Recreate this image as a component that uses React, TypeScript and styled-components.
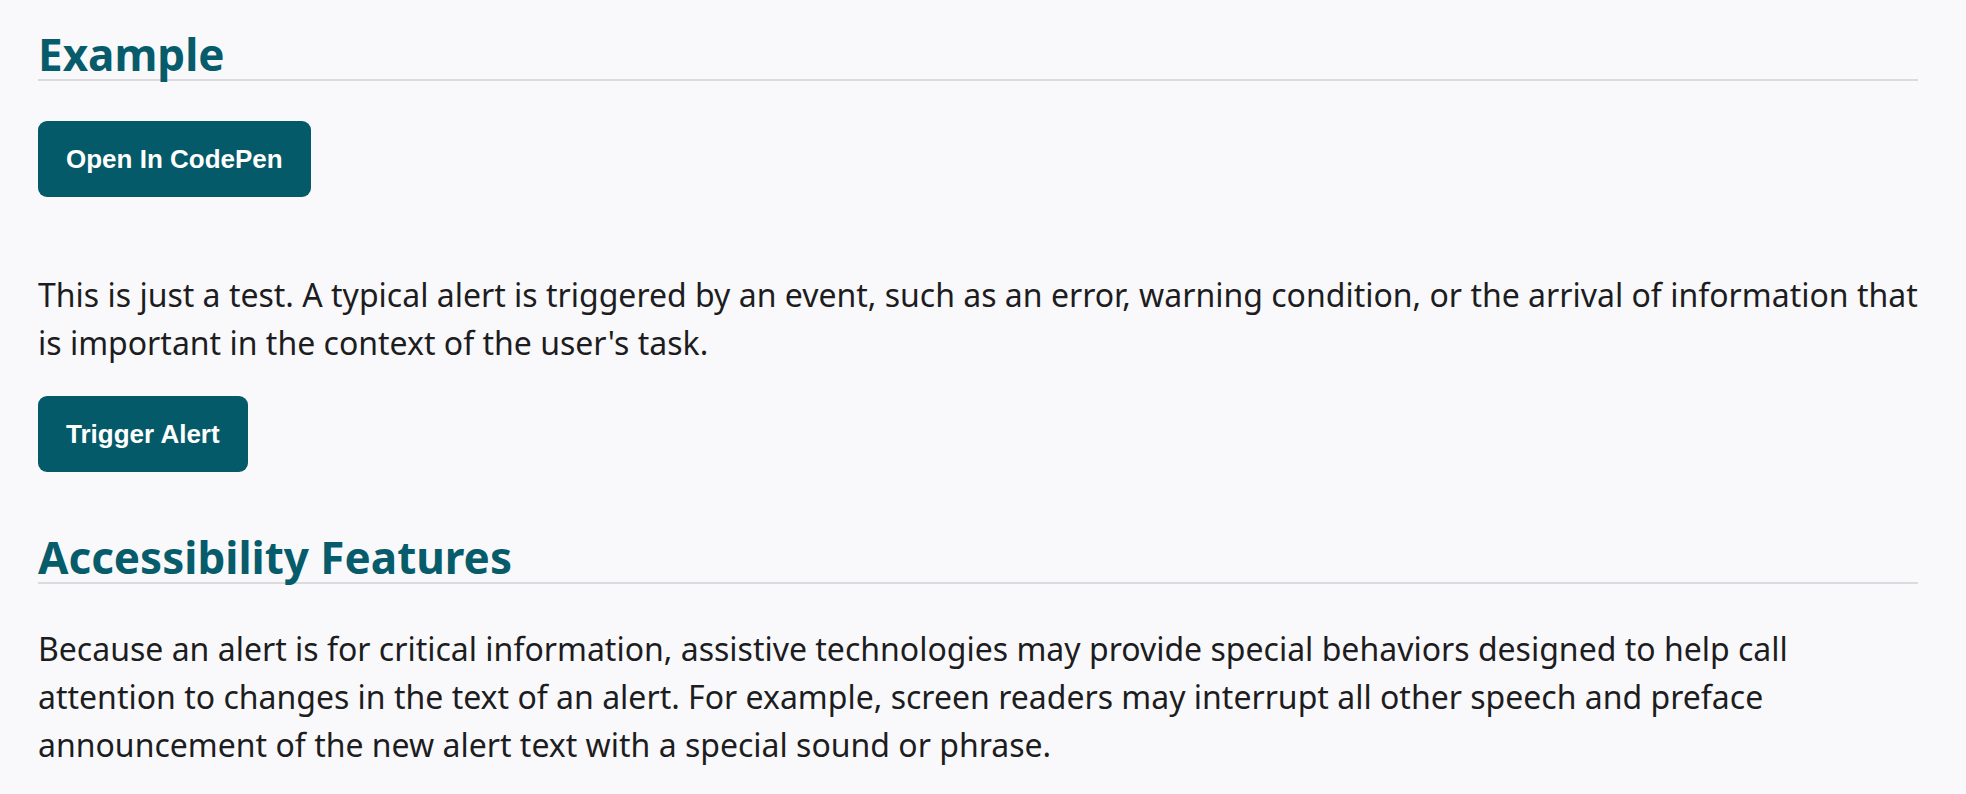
import * as React from "react";
import styled, { createGlobalStyle } from "styled-components";

const GlobalStyle = createGlobalStyle`
  html, body {
    margin: 0;
    padding: 0;
    background: #f9f9fb;
  }
  body {
    font-family: "Noto Sans", "Open Sans", sans-serif;
    color: #1d1d1f;
  }
`;

export default function App() {
  const [alertShown, setAlertShown] = React.useState(false);

  return (
    <>
      <GlobalStyle />
      <Page>
        <SectionTitle>Example</SectionTitle>
        <ActionButton type="button">Open In CodePen</ActionButton>
        <Lead>
          This is just a test. A typical alert is triggered by an event, such
          as an error, warning condition, or the arrival of information that
          is important in the context of the user's task.
        </Lead>
        <div role="alert">{alertShown ? null : null}</div>
        <ActionButton type="button" $compact onClick={() => setAlertShown(true)}>
          Trigger Alert
        </ActionButton>
        <SectionTitle $spaced>Accessibility Features</SectionTitle>
        <Body>
          Because an alert is for critical information, assistive technologies
          may provide special behaviors designed to help call attention to
          changes in the text of an alert. For example, screen readers may
          interrupt all other speech and preface announcement of the new alert
          text with a special sound or phrase.
        </Body>
      </Page>
    </>
  );
}

const Page = styled.main`
  display: flex;
  flex-direction: column;
  align-items: flex-start;
  padding: 29px 48px 40px 38px;
`;

const SectionTitle = styled.h2<{ $spaced?: boolean }>`
  align-self: stretch;
  margin: ${(p) => (p.$spaced ? "60px" : "0")} 0 0;
  font-family: "Noto Sans", sans-serif;
  font-size: 44px;
  font-weight: 700;
  line-height: 50px;
  color: #075c6b;
  border-bottom: 2px solid #dadadf;
`;

const ActionButton = styled.button<{ $compact?: boolean }>`
  margin-top: ${(p) => (p.$compact ? "29px" : "40px")};
  padding: 23px 28px;
  border: none;
  border-radius: 9px;
  background: #045a68;
  color: #ffffff;
  font-family: "Liberation Sans", Arial, sans-serif;
  font-size: 26px;
  font-weight: 700;
  line-height: 30px;
  cursor: pointer;
  &:hover {
    background: #03474f;
  }
`;

const Lead = styled.p`
  margin: 74px -8px 0 0;
  font-size: 32px;
  line-height: 48px;
`;

const Body = styled.p`
  margin: 41px -8px 0 0;
  font-size: 32px;
  line-height: 48px;
`;
